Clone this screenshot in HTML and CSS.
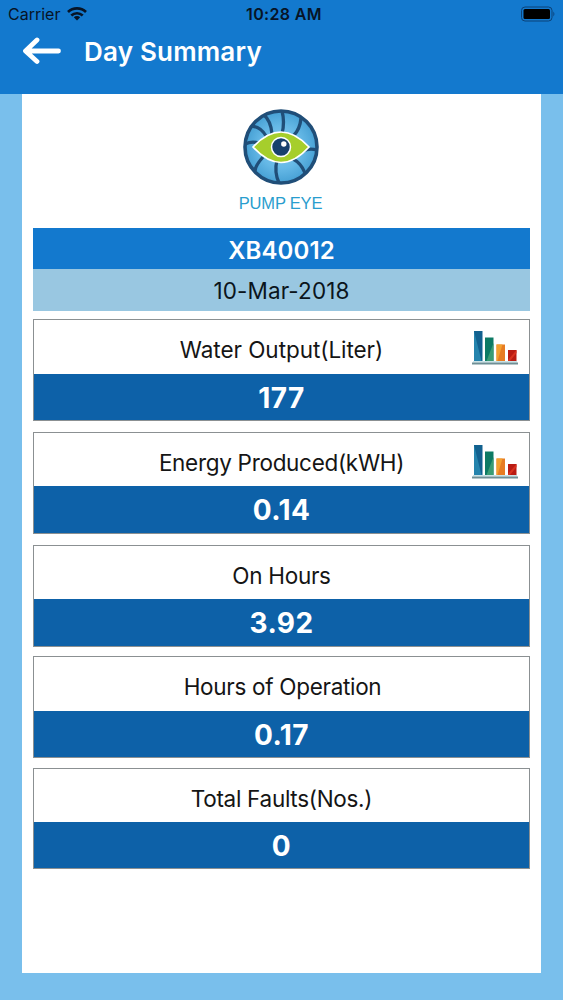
FILE: index.html
```html
<!DOCTYPE html>
<html lang="en">
<head>
<meta charset="utf-8">
<title>Day Summary</title>
<link rel="stylesheet" href="styles.css">
</head>
<body>
<svg class="defs" width="0" height="0" aria-hidden="true">
  <symbol id="chart" viewBox="0 0 48 36">
    <path fill="#12618f" d="M2 1h8.500v30H2z"/><path fill="#2584ad" d="M2 1l7.500 30H2z"/>
    <path fill="#0d7a64" d="M13 7.500h8.500V31H13z"/><path fill="#3a9c73" d="M21.500 13v18h-7z"/>
    <path fill="#e77c22" d="M24.500 14.500H33V31h-8.500z"/><path fill="#f3a02f" d="M24.500 14.500h6l-5 16.500h-1z"/>
    <path fill="#b91c14" d="M36 20h8.500v11H36z"/><path fill="#d83220" d="M44.500 20v3L38 31h-2v-1z"/>
    <path fill="#c8e2e6" d="M1 31h44v1.500H1z"/><path fill="#6f8f96" d="M0 32.500h46v2H0z"/>
  </symbol>
</svg>
<header class="header">
  <div class="status">
    <div class="carrier"><span class="carrier-name">Carrier</span>
      <svg class="wifi" width="20" height="14" viewBox="0 0 20 14"><g fill="none" stroke="#071426" stroke-width="2.700"><path d="M1 5a13 13 0 0 1 18 0"/><path d="M4.300 8.500a8.300 8.300 0 0 1 11.400 0"/></g><path fill="#071426" d="M10 13.500L6.800 10.300a4.600 4.600 0 0 1 6.400 0z"/></svg>
    </div>
    <span class="time">10:28 AM</span>
    <svg class="battery" width="36" height="16" viewBox="0 0 36 16"><rect x="1.500" y="1" width="30.500" height="14" rx="3.500" fill="none" stroke="#0b4278" stroke-width="1"/><rect x="3.500" y="3" width="26.500" height="10" rx="1.500" fill="#000"/><path d="M33.400 5.500q2 2.500 0 5z" fill="#0b4278"/></svg>
  </div>
  <div class="titlebar">
    <svg class="back" width="40" height="28" viewBox="0 0 40 28"><path d="M16 3L4.500 14 16 24.500M5 14H37.500" fill="none" stroke="#fff" stroke-width="4.800" stroke-linecap="round" stroke-linejoin="round"/></svg>
    <h1 class="title">Day Summary</h1>
  </div>
</header>
<main class="sheet">
  <div class="logo">
    <svg class="eye" width="78" height="78" viewBox="-39 -39 78 78">
      <defs><radialGradient id="iris"><stop offset="0" stop-color="#8bcdf0"/><stop offset=".6" stop-color="#65b8e6"/><stop offset="1" stop-color="#46a0d4"/></radialGradient></defs>
      <circle r="36" fill="url(#iris)" stroke="#204e78" stroke-width="3.600"/>
      <g fill="none" stroke="#204e78" stroke-width="3.300">
        <path d="M1 -13Q4 -25 1 -36"/>
        <path d="M13 -12Q19 -18 20 -29"/>
        <path d="M22 4Q28 1 36 3"/>
        <path d="M12 12Q20 16 24 26"/>
        <path d="M-4 13Q-7 25 -2 36"/>
        <path d="M-18 10Q-26 19 -26 24"/>
        <path d="M-23 -4Q-29 -6 -36 -3"/>
        <path d="M-15 -11Q-20 -20 -29 -21"/>
        <path d="M-9 -13Q-10 -26 -17 -32"/>
      </g>
      <path d="M-28 0Q-14 -15 0 -15Q14 -15 28 0Q14 15.500 0 15.500Q-14 15.500 -28 0Z" fill="#a6ce2c" stroke="#fff" stroke-width="1.700"/>
      <circle r="9.500" fill="#17406d" stroke="#fff" stroke-width="1.500"/><circle cx="2.800" cy="-3" r="2.700" fill="#fff"/>
    </svg>
    <div class="brand">PUMP EYE</div>
  </div>
  <div class="device">XB40012</div>
  <div class="date">10-Mar-2018</div>
  <div class="cards">
    <section class="card tall-label"><div class="label"><span class="water">Water Output(Liter)</span><svg class="chart" width="48" height="36"><use href="#chart"/></svg></div><div class="value">177</div></section>
    <section class="card"><div class="label"><span>Energy Produced(kWH)</span><svg class="chart low" width="48" height="36"><use href="#chart"/></svg></div><div class="value">0.14</div></section>
    <section class="card snug"><div class="label"><span>On Hours</span></div><div class="value">3.92</div></section>
    <section class="card tall-label"><div class="label"><span class="operation">Hours of Operation</span></div><div class="value">0.17</div></section>
    <section class="card last"><div class="label"><span>Total Faults(Nos.)</span></div><div class="value">0</div></section>
  </div>
</main>
</body>
</html>
```
FILE: styles.css
```css
* { box-sizing: border-box; }
body { margin: 0; height: 1000px; background: #79bfec; font-family: Inter, "Liberation Sans", sans-serif; overflow: hidden; }
.defs { position: absolute; }
.header { height: 94px; background: #1379ce; }
.status { height: 28px; display: grid; grid-template-columns: 1fr auto 1fr; align-items: center; padding: 0 7px 0 8px; color: #071426; font-size: 16px; line-height: 20px; }
.carrier { display: flex; align-items: center; gap: 7px; }
.carrier-name { letter-spacing: 0; }
.time { font-weight: 600; font-size: 16px; letter-spacing: 0.35px; padding-left: 4px; }
.battery { justify-self: end; }
.titlebar { display: flex; align-items: center; height: 46px; padding-left: 21px; }
.title { margin: 1px 0 0 23px; color: #fff; font-size: 26px; line-height: 32px; font-weight: 600; letter-spacing: 0.2px; }
.sheet { width: 519px; height: 879px; margin-left: 22px; padding: 14px 11px 0; background: #fff; }
.logo { height: 120px; display: flex; flex-direction: column; align-items: center; padding-right: 2px; }
.brand { margin-top: 7px; font-family: "Liberation Sans", sans-serif; font-size: 16.500px; line-height: 20px; letter-spacing: -0.2px; color: #299dce; }
.device { height: 41px; background: #1379ce; color: #fff; font-size: 24px; font-weight: 600; line-height: 45px; letter-spacing: 0.1px; text-align: center; }
.date { height: 42px; background: #99c7e1; color: #0b151c; font-size: 22.500px; line-height: 43px; letter-spacing: 0.1px; text-align: center; }
.cards { display: flex; flex-direction: column; margin-top: 8px; }
.card { height: 102px; margin-bottom: 11px; border: 1px solid #8b9092; display: flex; flex-direction: column; }
.card.snug { margin-bottom: 9px; }
.card.snug + .card { margin-bottom: 10px; }
.card.last { height: 101px; }
.label { height: 53px; flex: none; display: flex; justify-content: center; position: relative; color: #151515; font-size: 22.500px; line-height: 60px; letter-spacing: -0.3px; }
.tall-label .label { height: 54px; }
.water { letter-spacing: -0.05px; }
.operation { padding-left: 2px; }
.chart { position: absolute; right: 9px; top: 10px; }
.chart.low { top: 11px; }
.value { flex: 1; min-height: 0; background: #0d61a8; color: #fff; font-size: 28px; line-height: 49px; font-weight: 700; letter-spacing: 0.4px; text-align: center; }
```
